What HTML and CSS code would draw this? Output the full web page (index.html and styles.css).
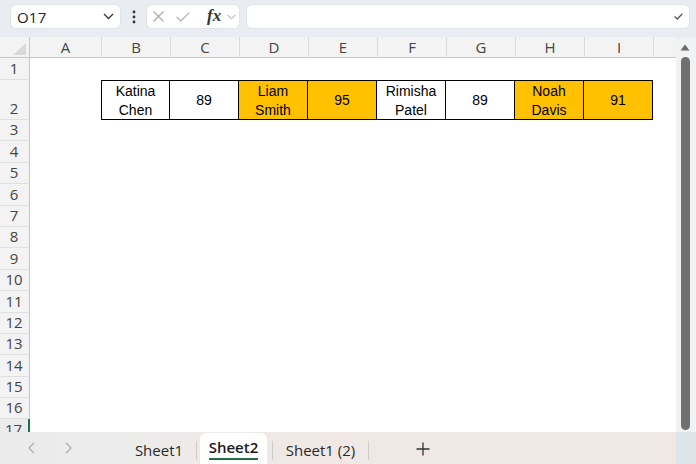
FILE: index.html
```html
<!DOCTYPE html>
<html>
<head>
<meta charset="utf-8">
<link rel="stylesheet" href="styles.css">
</head>
<body>
<div class="fbar">
  <div class="namebox">
    <span class="ref">O17</span>
    <svg class="nb-chev" width="11" height="7" viewBox="0 0 11 7"><path d="M1 1 L5.5 5.5 L10 1" fill="none" stroke="#333" stroke-width="1.3"/></svg>
  </div>
  <div class="vdots">
    <svg width="4" height="14" viewBox="0 0 4 14"><circle cx="2" cy="2" r="1.4" fill="#333"/><circle cx="2" cy="7" r="1.4" fill="#333"/><circle cx="2" cy="12" r="1.4" fill="#333"/></svg>
  </div>
  <div class="fnbox">
    <svg class="ic-x" width="11" height="11" viewBox="0 0 11 11"><path d="M0.5 0.5 L10.5 10.5 M10.5 0.5 L0.5 10.5" stroke="#a9a9a9" stroke-width="1.1" fill="none"/></svg>
    <svg class="ic-check" width="14" height="10" viewBox="0 0 14 10"><path d="M0.6 4.8 L4.8 9 L13.4 0.6" stroke="#a9a9a9" stroke-width="1.1" fill="none"/></svg>
    <span class="fx">fx</span>
    <svg class="ic-chev" width="9" height="6" viewBox="0 0 9 6"><path d="M0.6 0.8 L4.5 4.8 L8.4 0.8" stroke="#9a9a9a" stroke-width="1" fill="none"/></svg>
  </div>
  <div class="finput">
    <svg width="9" height="7" viewBox="0 0 9 7"><path d="M0.7 3.6 L3.3 6 L8.3 0.8" stroke="#555" stroke-width="1.3" fill="none"/></svg>
  </div>
</div>

<div class="main">
  <div class="sheet">
    <div class="corner"><svg width="29" height="20" viewBox="0 0 29 20"><polygon points="26,6 26,18 13,18" fill="#d9d9d9"/></svg></div>
    <div class="ch">A</div><div class="ch">B</div><div class="ch">C</div><div class="ch">D</div><div class="ch">E</div><div class="ch">F</div><div class="ch">G</div><div class="ch">H</div><div class="ch">I</div><div class="ch"></div>

    <div class="rh">1</div><div class="blank"></div>

    <div class="rh">2</div>
    <div class="cell"></div>
    <div class="cell bx first">Katina<br>Chen</div>
    <div class="cell bx">89</div>
    <div class="cell bx hl">Liam<br>Smith</div>
    <div class="cell bx hl">95</div>
    <div class="cell bx">Rimisha<br>Patel</div>
    <div class="cell bx">89</div>
    <div class="cell bx hl">Noah<br>Davis</div>
    <div class="cell bx hl">91</div>
    <div class="cell"></div>

    <div class="rh">3</div><div class="blank"></div>
    <div class="rh">4</div><div class="blank"></div>
    <div class="rh">5</div><div class="blank"></div>
    <div class="rh">6</div><div class="blank"></div>
    <div class="rh">7</div><div class="blank"></div>
    <div class="rh">8</div><div class="blank"></div>
    <div class="rh">9</div><div class="blank"></div>
    <div class="rh">10</div><div class="blank"></div>
    <div class="rh">11</div><div class="blank"></div>
    <div class="rh">12</div><div class="blank"></div>
    <div class="rh">13</div><div class="blank"></div>
    <div class="rh">14</div><div class="blank"></div>
    <div class="rh">15</div><div class="blank"></div>
    <div class="rh">16</div><div class="blank"></div>
    <div class="rh active">17</div><div class="blank"></div>
  </div>
  <div class="vscroll">
    <svg class="up" width="10" height="7" viewBox="0 0 10 7"><polygon points="5,0.5 9.5,6.5 0.5,6.5" fill="#6a6a6a"/></svg>
    <div class="thumb"></div>
  </div>
</div>

<div class="tabbar">
  <div class="tabs">
    <div class="nav">
      <svg width="7" height="12" viewBox="0 0 7 12"><path d="M6 0.8 L1 6 L6 11.2" stroke="#a8a8a8" stroke-width="1.2" fill="none"/></svg>
      <svg width="7" height="12" viewBox="0 0 7 12"><path d="M1 0.8 L6 6 L1 11.2" stroke="#a8a8a8" stroke-width="1.2" fill="none"/></svg>
    </div>
    <div class="tab t1">Sheet1</div>
    <div class="sep"></div>
    <div class="tab active"><span>Sheet2</span></div>
    <div class="sep"></div>
    <div class="tab t3">Sheet1 (2)</div>
    <div class="sep"></div>
    <div class="plus">
      <svg width="14" height="14" viewBox="0 0 14 14"><path d="M7 0.5 V13.5 M0.5 7 H13.5" stroke="#333" stroke-width="1.3" fill="none"/></svg>
    </div>
  </div>
  <div class="tabcorner"></div>
</div>
</body>
</html>
```

FILE: styles.css
```css
* { box-sizing: border-box; margin: 0; padding: 0; }

html, body {
  width: 696px;
  height: 464px;
  overflow: hidden;
}

body {
  background: #e9edf1;
  font-family: "Open Sans", "Noto Sans", sans-serif;
  color: #222;
}

/* ---------- formula bar ---------- */
.fbar {
  height: 37px;
  display: flex;
  align-items: flex-start;
  padding: 4px 0 0 10px;
}

.namebox {
  width: 111px;
  height: 25px;
  background: #fff;
  border: 1px solid #e0e4e8;
  border-radius: 6px;
  display: flex;
  align-items: center;
  justify-content: space-between;
  padding: 0 6px 0 6px;
}

.namebox .ref {
  font-size: 15px;
  color: #222;
  letter-spacing: 0.2px;
}

.vdots {
  width: 25px;
  height: 25px;
  display: flex;
  align-items: center;
  justify-content: center;
}

.fnbox {
  width: 94px;
  height: 25px;
  background: #fff;
  border: 1px solid #e0e4e8;
  border-radius: 6px;
  display: flex;
  align-items: center;
  padding-left: 6px;
}

.ic-x { margin-right: 12px; }
.ic-check { margin-right: 17px; }

.fx {
  font-family: "Liberation Serif", serif;
  font-style: italic;
  font-weight: bold;
  font-size: 17px;
  color: #333;
  margin-right: 6px;
  line-height: 1;
  margin-top: -2px;
}

.finput {
  margin-left: 6px;
  width: 444px;
  height: 25px;
  background: #fff;
  border: 1px solid #e0e4e8;
  border-radius: 6px;
  display: flex;
  align-items: center;
  justify-content: flex-end;
  padding-right: 6px;
}

/* ---------- sheet ---------- */
.main {
  display: flex;
  height: 395px;
}

.sheet {
  width: 676px;
  height: 395px;
  overflow: hidden;
  background: #fff;
  display: grid;
  grid-template-columns: 30px 71px repeat(8, 69px) 1fr;
  grid-template-rows: 21px 22px 40px repeat(15, 21.4px);
}

.corner {
  background: #f3f3f3;
  border-right: 1px solid #c8c8c8;
  border-bottom: 1px solid #c8c8c8;
}

.corner svg { display: block; }

.ch {
  background: #f3f3f3;
  border-left: 1px solid #dadada;
  border-bottom: 1px solid #c8c8c8;
  font-size: 15px;
  color: #444;
  display: flex;
  align-items: center;
  justify-content: center;
}

.ch:nth-child(2) { border-left: none; }

.rh {
  background: #f3f3f3;
  border-right: 1px solid #c8c8c8;
  border-bottom: 1px solid #e0e0e0;
  font-size: 15px;
  color: #444;
  line-height: 21px;
  display: flex;
  align-items: flex-end;
  justify-content: center;
  padding-right: 1px;
}

.rh.active {
  border-right: 2px solid #107c41;
  background: #ececec;
}

.blank { grid-column: 2 / -1; }

.cell {
  font-family: "Liberation Sans", Arial, sans-serif;
  font-size: 14px;
  line-height: 19px;
  color: #000;
  display: flex;
  align-items: center;
  justify-content: center;
  text-align: center;
}

.bx {
  height: 40px;
  border-top: 1px solid #000;
  border-bottom: 1px solid #000;
  border-right: 1px solid #000;
  padding-top: 1px;
}

.bx.first { border-left: 1px solid #000; }

.hl { background: #ffc000; }

/* ---------- vertical scrollbar ---------- */
.vscroll {
  width: 20px;
  height: 395px;
  background: #f1f2f3;
  border-top-left-radius: 6px;
  display: flex;
  flex-direction: column;
  align-items: center;
  padding-top: 7px;
  padding-right: 2px;
}

.vscroll .up { display: block; }

.thumb {
  margin-top: 6px;
  width: 9px;
  flex: 1;
  margin-bottom: 2px;
  background: #707070;
  border-radius: 5px;
}

/* ---------- tab bar ---------- */
.tabbar {
  display: flex;
  height: 32px;
}

.tabs {
  width: 676px;
  display: flex;
  align-items: center;
  background: linear-gradient(90deg, #ebebeb 0%, #ececeb 20%, #efe8e5 45%, #efe8e5 100%);
}

.tabcorner {
  flex: 1;
  background: #dde5ea;
}

.nav {
  width: 122px;
  display: flex;
  align-items: center;
  padding-left: 28px;
  gap: 30px;
}

.nav svg { display: block; }

.tab {
  font-size: 15px;
  color: #2a2a2a;
  text-align: center;
  height: 32px;
  line-height: 36px;
}

.t1 { width: 74px; }

.sep {
  width: 1px;
  height: 19px;
  background: #cfcbc8;
  margin-top: 4px;
}

.tab.active {
  width: 67px;
  margin: 1px 5px 0 3px;
  height: 31px;
  background: #fff;
  border-radius: 6px 6px 0 0;
  font-weight: 600;
  color: #1a1a1a;
  line-height: 28px;
}

.tab.active span {
  display: inline-block;
  border-bottom: 2px solid #1e6e3e;
  line-height: 22px;
  padding-top: 1px;
}

.t3 { width: 95px; }

.plus {
  margin-left: 47px;
  display: flex;
  align-items: center;
  margin-top: 2px;
}

.plus svg { display: block; }
```
